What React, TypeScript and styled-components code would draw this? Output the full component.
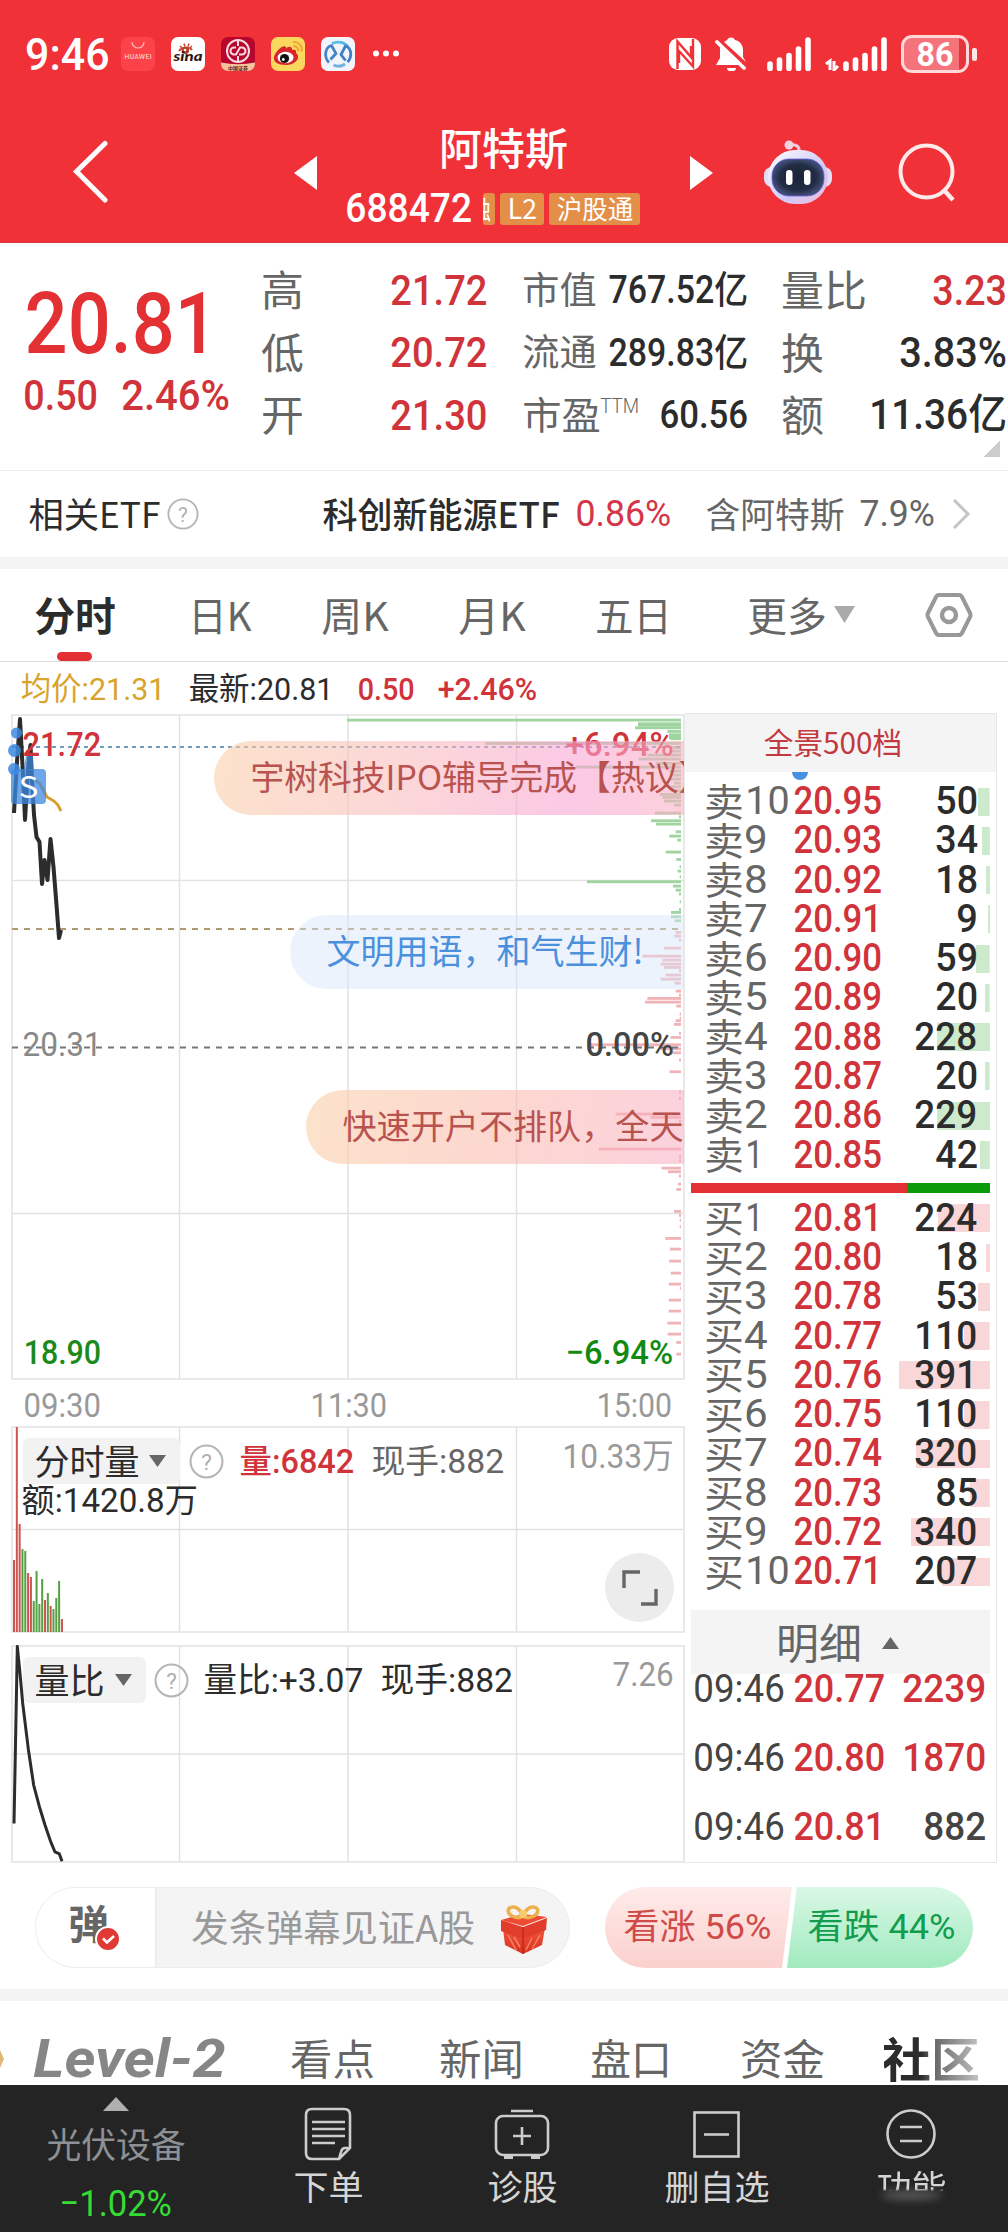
import React, { useLayoutEffect, useRef, useState } from "react";
import styled, { createGlobalStyle } from "styled-components";

const CJK = `"Noto Sans CJK SC", "Noto Sans", sans-serif`;
const NUM = `Roboto, "Noto Sans CJK SC", sans-serif`;
const RED = "#d0333a";
const INK = "#2c2c2c";
const GREY = "#666";
const FAINT = "#999";

const Global = createGlobalStyle`
  * { box-sizing: border-box; }
  body { margin: 0; background: #fff; font-family: ${CJK}; color: ${INK}; }
  #root { width: 1008px; }
  svg { display: block; flex: none; }
`;

/* ---------- text set to an exact measure ---------- */
const FitBox = styled.span<{ $w: number; $ml: number }>`
  display: block;
  flex: none;
  width: ${(p) => p.$w}px;
  margin-left: ${(p) => p.$ml}px;
  white-space: nowrap;
`;
const FitText = styled.span<{ $s: number; $wt: number; $c: string; $cjk: boolean }>`
  display: inline-block;
  vertical-align: top;
  line-height: ${(p) => p.$s}px;
  font-size: ${(p) => p.$s}px;
  font-weight: ${(p) => p.$wt};
  color: ${(p) => p.$c};
  font-family: ${(p) => (p.$cjk ? CJK : NUM)};
  transform-origin: 0 50%;
`;
type FitProps = { w: number; s: number; ml?: number; wt?: number; c?: string; cjk?: boolean; children: React.ReactNode };
function Fit({ w, s, ml = 0, wt = 500, c = INK, cjk = false, children }: FitProps) {
  const ref = useRef<HTMLSpanElement>(null);
  const [k, setK] = useState(1);
  useLayoutEffect(() => {
    if (ref.current) setK(w / (ref.current.offsetWidth - s * 0.09));
  }, [w, s, children]);
  const dy = cjk ? -0.056 * s : 0;
  return (
    <FitBox $w={w} $ml={ml}>
      <FitText ref={ref} $s={s} $wt={wt} $c={c} $cjk={cjk} style={{ transform: `translate(${-0.045 * s * k}px, ${dy}px) scaleX(${k})` }}>
        {children}
      </FitText>
    </FitBox>
  );
}

/* ---------- shared ---------- */
const Page = styled.div`
  width: 1008px;
  height: 2232px;
  overflow: hidden;
  background: #fff;
`;
const Row = styled.div<{ $h: number; $pl?: number; $pt?: number }>`
  display: flex;
  align-items: center;
  height: ${(p) => p.$h}px;
  padding-left: ${(p) => p.$pl ?? 0}px;
  padding-top: ${(p) => p.$pt ?? 0}px;
`;
const Band = styled.div`
  height: 12px;
  background: #f4f4f4;
`;
const Space = styled.span<{ $w: number }>`
  flex: none;
  width: ${(p) => p.$w}px;
`;

/* ---------- header ---------- */
const Header = styled.header`
  height: 243px;
  background: #f13138;
  border-bottom: 1px solid #d8393f;
`;
const StatusBar = styled.div`
  display: flex;
  align-items: center;
  height: 104px;
  padding: 4px 31px 0 27px;
`;
const AppIcons = styled.div`
  display: flex;
  gap: 16px;
  margin-left: 13px;
`;
const StatusRight = styled.div`
  display: flex;
  align-items: center;
  margin-left: auto;
`;
const NavBar = styled.div`
  display: flex;
  align-items: center;
  height: 138px;
`;
const TitleBlock = styled.div`
  flex: none;
  width: 303px;
  height: 138px;
  margin: 0 40px 0 30px;
  padding-top: 18px;
`;
const Tag = styled.span<{ $w: number; $ml: number; $clip?: boolean }>`
  display: flex;
  align-items: center;
  justify-content: center;
  flex: none;
  width: ${(p) => p.$w}px;
  height: 32px;
  margin-left: ${(p) => p.$ml}px;
  border-radius: 3px;
  overflow: ${(p) => (p.$clip ? "hidden" : "visible")};
  background: #e48f48;
`;

function StatusIcons() {
  return (
    <AppIcons>
      <svg width="34" height="34" viewBox="0 0 34 34">
        <rect width="34" height="34" rx="7" fill="#fb4349" />
        <path d="M11 5a6 6 0 0 0 12 0" fill="none" stroke="#ffb9b9" strokeWidth="1.2" />
        <text x="17" y="22" textAnchor="middle" fontFamily="Roboto" fontSize="6.6" textLength="27" fill="#ffe3e3">HUAWEI</text>
      </svg>
      <svg width="34" height="34" viewBox="0 0 34 34">
        <rect width="34" height="34" rx="7" fill="#fff" />
        <path d="M8 14c3-4 10-5 13-1" fill="none" stroke="#c94a33" strokeWidth="2" />
        <circle cx="14.500" cy="13.500" r="3.600" fill="#b33a25" />
        <circle cx="14" cy="13" r="1.300" fill="#fff" />
        <path d="M9 9 l2 2 M13 6.500 l1 3 M18 6.500 l-1 3 M21 9 l-2 2" stroke="#c94a33" strokeWidth="1.500" />
        <text x="17" y="23.500" textAnchor="middle" fontFamily="Lato, sans-serif" fontStyle="italic" fontWeight="900" fontSize="14" textLength="29" lengthAdjust="spacingAndGlyphs" fill="#35150f">sina</text>
      </svg>
      <svg width="34" height="34" viewBox="0 0 34 34">
        <rect width="34" height="34" rx="7" fill="#b8052e" />
        <path d="M0 25.500 Q17 29 34 25.500 V27 a7 7 0 0 1 -7 7 H7 a7 7 0 0 1 -7 -7z" fill="#f7c39c" />
        <g fill="none" stroke="#f6dce2" strokeWidth="2">
          <circle cx="17" cy="14" r="11" />
          <path d="M17 3v6M17 19v6M15 10.500h-2a3.500 3.500 0 0 0 0 7h2l4-7h2a3.500 3.500 0 0 1 0 7h-3" />
        </g>
        <text x="17" y="32.600" textAnchor="middle" fontFamily={CJK} fontWeight="700" fontSize="5" fill="#5c2617">中国证券</text>
      </svg>
      <svg width="34" height="34" viewBox="0 0 34 34">
        <rect width="34" height="34" rx="7" fill="#fbd75f" />
        <path d="M15 12c1-3 7-3 6 1 5-1 4 2 4 3 5 3 1 12-10 12C7 28 2 25 3 20c1-5 9-13 12-10z" fill="#d8252c" />
        <ellipse cx="14.500" cy="20.500" rx="8" ry="5.800" fill="#fff" />
        <circle cx="13.500" cy="21.500" r="4.600" fill="#111" />
        <circle cx="12.300" cy="22.500" r="1.400" fill="#fff" />
        <path d="M22 5c5-1 10 4 8.500 9.500M22.500 9c3 0 5 2 4.500 5" fill="none" stroke="#f0a030" strokeWidth="1.900" />
      </svg>
      <svg width="34" height="34" viewBox="0 0 34 34">
        <rect width="34" height="34" rx="7" fill="#f3f4fb" />
        <g fill="none" strokeWidth="2.800">
          <path d="M8 25.500C2.500 20 4 10 10.500 8.500L15 16.500L9.500 22.500" stroke="#4184c8" />
          <path d="M11 6.500c6-3 13-1 16 3.500" stroke="#56bde0" />
          <path d="M26.500 25C32 19.500 30 10.500 24.500 9L20 17.500L24.500 23.500" stroke="#3f7fc6" />
          <path d="M12.500 28c4 2 8 1.500 11.500-1" stroke="#6fb2e0" />
        </g>
      </svg>
      <svg width="40" height="34" viewBox="0 0 40 34">
        <g fill="#fff"><circle cx="5" cy="16.500" r="3" /><circle cx="15" cy="16.500" r="3" /><circle cx="25" cy="16.500" r="3" /></g>
      </svg>
    </AppIcons>
  );
}

function Bars() {
  return (
    <g stroke="#fff" strokeWidth="5.600" strokeLinecap="round">
      <path d="M3 27v4.500M12.500 23v8.500M22 18.500v13M31.500 12v19.500M41 3v28.500" />
    </g>
  );
}

const BatteryBox = styled.div`
  display: flex;
  align-items: center;
  justify-content: center;
  width: 68px;
  height: 38px;
  margin-left: 14px;
  border: 3px solid #ffd9da;
  border-radius: 11px;
  background: linear-gradient(90deg, #f5737a 0 88%, #e6343c 88%);
`;
const BatteryNub = styled.div`
  width: 5px;
  height: 13px;
  margin-left: 3px;
  border-radius: 2px;
  background: #ffe6e6;
`;

function Top() {
  return (
    <Header>
      <StatusBar>
        <Fit w={81} s={45} c="#fff">9:46</Fit>
        <StatusIcons />
        <StatusRight>
          <svg width="32" height="34" viewBox="0 0 32 34">
            <rect y="1" width="32" height="32" rx="9" fill="#fff" />
            <path d="M8.500 32V4.500L22 20V9" fill="none" stroke="#f13138" strokeWidth="2.400" />
            <path d="M24 2v27.500L10 14v12" fill="none" stroke="#f13138" strokeWidth="2.400" />
          </svg>
          <Space $w={14} />
          <svg width="32" height="34" viewBox="0 0 32 34">
            <path d="M12 3a4.500 4.500 0 0 1 8 0c5 1 8 5 8 10v7l3 5L9 5zM5 10l19 18H1l4-7z" fill="#fff" />
            <path d="M12 31h9a4.500 3.500 0 0 1-9 0z" fill="#fff" />
            <path d="M2 5l27 26" stroke="#fff" strokeWidth="3.800" strokeLinecap="round" />
          </svg>
          <Space $w={20} />
          <svg width="44" height="34" viewBox="0 0 44 34"><Bars /></svg>
          <Space $w={14} />
          <svg width="62" height="34" viewBox="0 0 62 34">
            <path d="M1 27l4-3v9M9 24v9l4-4" fill="none" stroke="#fff" strokeWidth="3" />
            <g transform="translate(18 0)"><Bars /></g>
          </svg>
          <BatteryBox><Fit w={34} s={34} wt={700} c="#fff">86</Fit></BatteryBox>
          <BatteryNub />
        </StatusRight>
      </StatusBar>
      <NavBar>
        <Space $w={72} />
        <svg width="38" height="66" viewBox="0 0 38 66"><path d="M33 3.500L4.500 31.500L33 60" fill="none" stroke="#fff" strokeWidth="5" strokeLinecap="round" /></svg>
        <Space $w={184} />
        <svg width="23" height="34" viewBox="0 0 23 34"><path d="M23 0v34L0 17z" fill="#fff" /></svg>
        <TitleBlock>
          <Row $h={52} $pl={94}><Fit w={125} s={43} cjk c="#fff">阿特斯</Fit></Row>
          <Row $h={70}>
            <Fit w={123} s={40} c="#fff">688472</Fit>
            <Tag $w={12} $ml={13} $clip><Fit w={24} s={25} cjk wt={400} c="#fff" ml={-22}>融</Fit></Tag>
            <Tag $w={44} $ml={5}><Fit w={27} s={28} cjk wt={400} c="#fff">L2</Fit></Tag>
            <Tag $w={91} $ml={5}><Fit w={74} s={26} cjk wt={400} c="#fff">沪股通</Fit></Tag>
          </Row>
        </TitleBlock>
        <svg width="23" height="34" viewBox="0 0 23 34"><path d="M0 0v34L23 17z" fill="#fff" /></svg>
        <Space $w={50} />
        <svg width="70" height="68" viewBox="0 0 70 68">
          <defs>
            <linearGradient id="shell" x1="0" y1="0" x2="1" y2="1"><stop offset="0" stopColor="#fff" /><stop offset="0.600" stopColor="#cfcaf7" /><stop offset="1" stopColor="#f3bcd9" /></linearGradient>
            <radialGradient id="face"><stop offset="0" stopColor="#1a2338" /><stop offset="0.700" stopColor="#222c44" /><stop offset="1" stopColor="#3f4c75" /></radialGradient>
          </defs>
          <path d="M36 14c1-7-3-9-9-8" fill="none" stroke="#f3cfe0" strokeWidth="3" />
          <circle cx="26" cy="6" r="4.500" fill="#f7d3df" />
          <rect x="1" y="28" width="68" height="20" rx="8" fill="#e4ddf8" />
          <rect x="5" y="11" width="60" height="54" rx="27" fill="url(#shell)" />
          <rect x="9" y="20" width="52" height="37" rx="17" fill="url(#face)" stroke="#6a5edb" strokeWidth="0.800" />
          <rect x="23" y="31" width="6.500" height="15" rx="3.200" fill="#fff" />
          <rect x="41" y="31" width="6.500" height="15" rx="3.200" fill="#fff" />
        </svg>
        <Space $w={64} />
        <svg width="62" height="62" viewBox="0 0 62 62"><circle cx="29.500" cy="29.500" r="26" fill="none" stroke="#ffe9e9" strokeWidth="4" /><path d="M46 47l10 11" stroke="#ffe9e9" strokeWidth="4.500" /></svg>
      </NavBar>
    </Header>
  );
}

/* ---------- quote summary ---------- */
const Quote = styled.section`
  display: grid;
  grid-template-columns: 263px 261px 259px 225px;
  height: 228px;
  padding-top: 16px;
  border-bottom: 1px solid #ececec;
`;
const Stack = styled.div`
  display: flex;
  flex-direction: column;
`;
const StatRow = styled.div<{ $right: number }>`
  display: flex;
  align-items: center;
  justify-content: space-between;
  height: 62.500px;
  padding-right: ${(p) => p.$right}px;
`;
const PE = styled.div`
  display: flex;
`;
const Corner = styled.div`
  align-self: flex-end;
  width: 17px;
  height: 17px;
  margin: -7px 8px 0 0;
  background: linear-gradient(135deg, transparent 50%, #ccc 50%);
`;

function Summary() {
  return (
    <Quote>
      <Stack>
        <Row $h={130} $pl={28}><Fit w={186} s={86} c="#e23033">20.81</Fit></Row>
        <Row $h={13} $pl={25}><Fit w={71} s={42} c={RED}>0.50</Fit><Fit w={105} s={42} ml={27} c={RED}>2.46%</Fit></Row>
      </Stack>
      <Stack>
        {[["高", "21.72"], ["低", "20.72"], ["开", "21.30"]].map(([l, v]) => (
          <StatRow $right={38} key={l}><Fit w={39} s={42} cjk wt={400} c={GREY}>{l}</Fit><Fit w={94} s={43} c={RED}>{v}</Fit></StatRow>
        ))}
      </Stack>
      <Stack>
        <StatRow $right={36}><Fit w={71} s={37} cjk wt={400} c={GREY}>市值</Fit><Fit w={137} s={38}>767.52亿</Fit></StatRow>
        <StatRow $right={36}><Fit w={71} s={37} cjk wt={400} c={GREY}>流通</Fit><Fit w={137} s={38}>289.83亿</Fit></StatRow>
        <StatRow $right={36}>
          <PE><Fit w={75} s={38} cjk wt={400} c={GREY}>市盈</Fit><Fit w={37} s={20} ml={2} wt={300} c={GREY}>TTM</Fit></PE>
          <Fit w={86} s={39}>60.56</Fit>
        </StatRow>
      </Stack>
      <Stack>
        <StatRow $right={3}><Fit w={82} s={42} cjk wt={400} c={GREY}>量比</Fit><Fit w={71} s={43} c={RED}>3.23</Fit></StatRow>
        <StatRow $right={3}><Fit w={39} s={42} cjk wt={400} c={GREY}>换</Fit><Fit w={104} s={42}>3.83%</Fit></StatRow>
        <StatRow $right={3}><Fit w={39} s={42} cjk wt={400} c={GREY}>额</Fit><Fit w={134} s={42}>11.36亿</Fit></StatRow>
        <Corner />
      </Stack>
    </Quote>
  );
}

const HelpBox = styled.span<{ $ml: number }>`
  margin-left: ${(p) => p.$ml}px;
`;
const Help = ({ d, ml }: { d: number; ml: number }) => (
  <HelpBox $ml={ml}>
    <svg width={d} height={d} viewBox="0 0 34 34">
      <circle cx="17" cy="17" r="15.500" fill="none" stroke="#b5b5b5" strokeWidth="2" />
      <text x="17" y="25" textAnchor="middle" fontFamily="Roboto" fontSize="22" fill="#b0b0b0">?</text>
    </svg>
  </HelpBox>
);

/* ---------- chart period tabs ---------- */
const Tabs = styled.nav`
  display: flex;
  align-items: stretch;
  height: 93px;
  padding-left: 36px;
  border-bottom: 1px solid #dedede;
`;
const TabItem = styled.div<{ $ml?: number }>`
  display: flex;
  flex-direction: column;
  align-items: center;
  padding-top: 27px;
  margin-left: ${(p) => p.$ml ?? 0}px;
`;
const Underline = styled.div`
  width: 35px;
  height: 9px;
  margin-top: 16px;
  margin-right: 2px;
  border-radius: 5px;
  background: #e23033;
`;
const TabIcon = styled.div<{ $ml: number; $pt: number }>`
  margin-left: ${(p) => p.$ml}px;
  padding-top: ${(p) => p.$pt}px;
`;

function PeriodTabs() {
  return (
    <Tabs>
      <TabItem><Fit w={78} s={40} cjk wt={700}>分时</Fit><Underline /></TabItem>
      <TabItem $ml={76}><Fit w={60} s={40} cjk wt={400} c={GREY}>日K</Fit></TabItem>
      <TabItem $ml={73}><Fit w={64} s={40} cjk wt={400} c={GREY}>周K</Fit></TabItem>
      <TabItem $ml={73}><Fit w={64} s={40} cjk wt={400} c={GREY}>月K</Fit></TabItem>
      <TabItem $ml={73}><Fit w={73} s={40} cjk wt={400} c={GREY}>五日</Fit></TabItem>
      <TabItem $ml={79}><Fit w={76} s={40} cjk wt={400} c={GREY}>更多</Fit></TabItem>
      <TabIcon $ml={9} $pt={37}><svg width="21" height="17" viewBox="0 0 21 17"><path d="M0 0h21L10.500 17z" fill="#aaa" /></svg></TabIcon>
      <TabIcon $ml={70} $pt={23}>
        <svg width="48" height="46" viewBox="0 0 48 46"><path d="M14 3h20q2 0 3 2l8 16q1 2 0 4l-8 16q-1 2-3 2H14q-2 0-3-2L3 25q-1-2 0-4L11 5q1-2 3-2z" fill="none" stroke="#999" strokeWidth="4" /><circle cx="24" cy="23" r="7" fill="none" stroke="#999" strokeWidth="4.400" /></svg>
      </TabIcon>
    </Tabs>
  );
}

/* ---------- charts ---------- */
const Market = styled.section`
  display: grid;
  grid-template-columns: 685px 312px;
  height: 1150px;
`;
const Panel = styled.div<{ $h: number; $mt?: number }>`
  position: relative;
  height: ${(p) => p.$h}px;
  margin-top: ${(p) => p.$mt ?? 0}px;
  overflow: hidden;
`;
const Backdrop = styled.div`
  position: absolute;
  inset: 0;
`;
const Over = styled.div<{ $x: number; $y: number }>`
  position: absolute;
  left: ${(p) => p.$x}px;
  top: ${(p) => p.$y}px;
  display: flex;
  align-items: center;
  height: 0;
`;
const Danmaku = styled.div<{ $x: number; $y: number; $tone: "warm" | "blue" | "coral" }>`
  position: absolute;
  left: ${(p) => p.$x}px;
  right: 1px;
  top: ${(p) => p.$y}px;
  display: flex;
  align-items: center;
  height: 74px;
  padding-left: 38px;
  border-radius: 37px 0 0 37px;
  overflow: hidden;
  background: ${(p) =>
    p.$tone === "blue"
      ? "rgba(214, 228, 249, 0.45)"
      : p.$tone === "warm"
      ? "linear-gradient(100deg, rgba(250,205,165,.58), rgba(249,180,190,.56) 48%, rgba(250,165,212,.6) 75%, rgba(250,178,195,.6))"
      : "linear-gradient(100deg, rgba(250,205,165,.58), rgba(250,184,170,.56) 50%, rgba(249,175,195,.56))"};
`;
const Marker = styled.div`
  position: absolute;
  left: 11px;
  top: 56px;
  display: flex;
  align-items: center;
  justify-content: center;
  width: 35px;
  height: 35px;
  border-radius: 4px;
  background: rgba(61, 138, 226, 0.75);
`;

const asks: [number, number][] = [
  [60, -471], [71, 402], [75, 402], [83, 393], [94, 490], [104, 495], [112, 495], [116, 500], [130, -57], [142, 500], [153, 495], [165, 430], [177, 404], [190, 455], [201, 217], [213, 495],
  [225, 498], [237, 500], [249, 510], [260, 500], [272, 505], [283, 467], [292, 475], [303, 480], [315, 510], [339, 453], [350, 525], [362, 441],
  [372, 456], [395, 515], [408, 496], [420, 520], [456, 485], [478, 517], [500, 527], [513, 521], [530, 527], [545, 249], [558, 507], [570, 515],
  [582, 525], [605, 527], [628, 525], [637, 501], [650, 501], [662, 512],
];
const bids: [number, number][] = [
  [697, 515], [708, 511], [720, 525], [744, 480], [768, 415], [780, 475], [792, 470], [802, 480], [812, 525], [825, 485], [837, 470], [849, 512],
  [873, 515], [885, 525], [895, 430], [906, 423], [918, 517], [942, 527], [954, 527], [962, 515], [973, 510], [1000, 525], [1012, 500], [1034, 260],
  [1046, 470], [1058, 505], [1080, 525], [1115, 497], [1175, 525], [1195, 525], [1242, 335], [1252, 440], [1264, 525], [1347, 285], [1370, 525],
  [1382, 525], [1404, 473], [1415, 492], [1428, 525], [1452, 522], [1468, 517], [1534, 510], [1546, 525], [1560, 527], [1580, 527], [1615, 484],
  [1647, 498], [1683, 495], [1719, 500], [1752, 494], [1765, 528], [1800, 494], [1833, 494], [1869, 490], [1902, 491], [1927, 517], [1962, 517],
];
const depth = (list: [number, number][], fill: string) =>
  list.map(([y, x]) => <rect key={y} x={504 + x / 3} y={698.7 + y / 3} width={177 - x / 3} height="2.800" fill={fill} />);

function PriceChart() {
  return (
    <Panel $h={667}>
      <Backdrop>
        <svg width="685" height="667" viewBox="0 713 685 667">
          <g stroke="#e2e2e2" strokeWidth="1.500" fill="none">
            <path d="M12 715H684V1379H12zM12 880.500H684M12 1213.500H684M179.500 715V1379M348 715V1379M516.500 715V1379" />
          </g>
          {depth(asks, "#9fd3a0")}
          {depth(bids, "#f0b3b8")}
          <path d="M12 747H684" stroke="#6f9fc0" strokeWidth="1.800" strokeDasharray="4 4" />
          <path d="M12 929H684" stroke="#b09a72" strokeWidth="1.800" strokeDasharray="6 6" />
          <path d="M12 1047.500H684" stroke="#777" strokeWidth="1.800" strokeDasharray="6 6" />
          <polyline points="14,813 17,762 20,719 23,775 25,820 28,770 30.500,745 32,780 34,815 36.500,837 39.500,842 42,884 44.500,860 47.500,880 50.500,839 53.500,867 56.500,905 59,938 61,930" fill="none" stroke="#2c2c2c" strokeWidth="4" strokeLinejoin="round" />
          <polyline points="33,778 40,784 47,797 54,801 58,805 61,811" fill="none" stroke="#d99b2b" strokeWidth="2.800" />
          <g fill="#3d8ae2" fillOpacity="0.850"><circle cx="16.500" cy="733" r="5.500" /><circle cx="14.500" cy="750.500" r="6.500" /><circle cx="14" cy="769" r="6" /><path d="M24 770l2-16h7v16z" fillOpacity="0.700" /></g>
        </svg>
      </Backdrop>
      <Marker><Fit w={17} s={30} cjk wt={400} c="#fff">S</Fit></Marker>
      <Over $x={24} $y={31}><Fit w={76} s={34} c={RED}>21.72</Fit></Over>
      <Over $x={567} $y={31}><Fit w={105} s={34} c={RED}>+6.94%</Fit></Over>
      <Over $x={24} $y={331}><Fit w={76} s={34} wt={400} c="#888">20.31</Fit></Over>
      <Over $x={587} $y={331}><Fit w={85} s={34} c="#444">0.00%</Fit></Over>
      <Over $x={25} $y={639}><Fit w={75} s={34} c="#1b8a1b">18.90</Fit></Over>
      <Over $x={567} $y={639}><Fit w={105} s={34} c="#128a12">−6.94%</Fit></Over>
      <Danmaku $x={214} $y={28} $tone="warm"><Fit w={459} s={34} cjk wt={400} c="#b9534f">宇树科技IPO辅导完成【热议】</Fit></Danmaku>
      <Danmaku $x={290} $y={202} $tone="blue"><Fit w={314} s={34} cjk wt={400} c="#4a90dc">文明用语，和气生财!</Fit></Danmaku>
      <Danmaku $x={306} $y={377} $tone="coral"><Fit w={338} s={34} cjk wt={400} c="#b9534f">快速开户不排队，全天</Fit></Danmaku>
    </Panel>
  );
}

const volume: [number, 0 | 1][] = [
  [1560, 1], [1427, 1], [1524, 1], [1549, 0], [1551, 0], [1573, 1], [1577, 1], [1601, 0], [1571, 0], [1604, 0], [1579, 0], [1600, 1], [1593, 0],
  [1606, 1], [1609, 0], [1598, 0], [1581, 0], [1619, 1],
];
const Picker = styled.div<{ $w: number }>`
  display: flex;
  align-items: center;
  justify-content: space-between;
  flex: none;
  width: ${(p) => p.$w}px;
  height: 46px;
  padding: 0 14px 0 13px;
  border-radius: 6px;
  background: #f2f2f2;
`;
const Legend = styled.div`
  position: relative;
  display: flex;
  align-items: center;
  height: 46px;
  margin: 12px 0 0 23px;
`;
const SecondLine = styled.div`
  position: relative;
  display: flex;
  align-items: center;
  height: 32px;
  padding-left: 23px;
`;
const Expand = styled.div`
  position: absolute;
  left: 605px;
  top: 127px;
  display: flex;
  align-items: center;
  justify-content: center;
  width: 69px;
  height: 69px;
  border-radius: 50%;
  background: #ececec;
`;
const Caret = () => <svg width="17" height="12" viewBox="0 0 17 12"><path d="M0 0h17L8.500 12z" fill={GREY} /></svg>;

function VolumeChart() {
  return (
    <Panel $h={207}>
      <Backdrop>
        <svg width="685" height="207" viewBox="0 1426 685 207">
          <path d="M12 1427H684V1632H12zM12 1529.500H684M179.500 1427V1632M348 1427V1632M516.500 1427V1632" stroke="#e2e2e2" strokeWidth="1.500" fill="none" />
          {volume.map(([y, up], i) => <rect key={i} x={13 + i * 2.82} y={y} width="2" height={1632 - y} fill={up ? "#cf5450" : "#55a043"} />)}
        </svg>
      </Backdrop>
      <Legend>
        <Picker $w={157}><Fit w={102} s={35} cjk wt={400}>分时量</Fit><Caret /></Picker>
        <Help d={35} ml={9} />
        <Fit w={112} s={33} ml={17} c={RED}>量:6842</Fit>
        <Fit w={130} s={33} ml={20} wt={400} c={GREY}>现手:882</Fit>
      </Legend>
      <SecondLine><Fit w={173} s={33} wt={400}>额:1420.8万</Fit></SecondLine>
      <Over $x={564} $y={30}><Fit w={108} s={34} wt={400} c={FAINT}>10.33万</Fit></Over>
      <Expand>
        <svg width="36" height="36" viewBox="0 0 36 36"><path d="M2 18V2h16M34 19v15H19" fill="none" stroke="#666" strokeWidth="3.400" /></svg>
      </Expand>
    </Panel>
  );
}

const ratio: [number, number][] = [[42, 1416], [52, 937], [60, 1010], [68, 1090], [85, 1215], [101, 1312], [118, 1370], [135, 1420], [152, 1465], [165, 1493], [178, 1498], [186, 1518]];
function RatioChart() {
  return (
    <Panel $h={218} $mt={12}>
      <Backdrop>
        <svg width="685" height="218" viewBox="0 1645 685 218">
          <path d="M12 1646H684V1862H12zM12 1754H684M179.500 1646V1862M348 1646V1862M516.500 1646V1862" stroke="#e2e2e2" strokeWidth="1.500" fill="none" />
        </svg>
      </Backdrop>
      <Legend>
        <Picker $w={123}><Fit w={67} s={35} cjk wt={400}>量比</Fit><Caret /></Picker>
        <Help d={35} ml={8} />
        <Fit w={157} s={34} ml={16} wt={400}>量比:+3.07</Fit>
        <Fit w={130} s={34} ml={20} wt={400}>现手:882</Fit>
      </Legend>
      <Over $x={614} $y={29}><Fit w={58} s={34} wt={400} c={FAINT}>7.26</Fit></Over>
      <Backdrop>
        <svg width="685" height="218" viewBox="0 1645 685 218">
          <polyline points={ratio.map(([x, y]) => `${x / 3},${1300 + y * 0.3697}`).join(" ")} fill="none" stroke="#2c2c2c" strokeWidth="3" strokeLinejoin="round" />
        </svg>
      </Backdrop>
    </Panel>
  );
}

/* ---------- order book ---------- */
const Book = styled.aside`
  border: 1px solid #e6e6e6;
  border-width: 1px 1px 1px 0;
  padding-left: 6px;
`;
const BookHead = styled.div`
  display: flex;
  align-items: center;
  height: 58px;
  margin-left: -6px;
  padding-left: 80px;
  background: #f4f4f4;
`;
const Dot = styled.div`
  width: 16px;
  height: 8px;
  margin: 0 0 2px 101px;
  border-radius: 0 0 8px 8px;
  background: #4a90e2;
`;
const Level = styled.div`
  display: flex;
  align-items: center;
  height: 39.280px;
  padding-left: 15px;
`;
const LabelCell = styled.div`
  display: flex;
  align-items: center;
  width: 89px;
`;
const QtyCell = styled.div<{ $buy: boolean; $bar: number }>`
  display: flex;
  align-items: center;
  justify-content: flex-end;
  width: 109px;
  height: 28px;
  padding-right: 14.5px;
  background: linear-gradient(${(p) => (p.$buy ? "#f9d6d8, #f9d6d8" : "#cdeacd, #cdeacd")}) right / ${(p) => p.$bar}px 28px no-repeat;
`;
const Balance = styled.div`
  width: 299px;
  height: 10px;
  margin: 8px 0 6px;
  background: linear-gradient(90deg, #e23033 216px, #0a9a0a 216px);
`;
const DetailHead = styled.div`
  display: flex;
  align-items: center;
  width: 299px;
  height: 64px;
  margin: 19px 0 -19px;
  padding: 2px 0 0 87px;
  background: #f4f4f4;
`;
const Trade = styled.div`
  display: flex;
  align-items: center;
  height: 69px;
  padding-left: 4px;
`;
const TradeQty = styled.div`
  display: flex;
  justify-content: flex-end;
  width: 101px;
`;

const sells: [number, string, number][] = [[10, "20.95", 50], [9, "20.93", 34], [8, "20.92", 18], [7, "20.91", 9], [6, "20.90", 59], [5, "20.89", 20], [4, "20.88", 228], [3, "20.87", 20], [2, "20.86", 229], [1, "20.85", 42]];
const buys: [number, string, number][] = [[1, "20.81", 224], [2, "20.80", 18], [3, "20.78", 53], [4, "20.77", 110], [5, "20.76", 391], [6, "20.75", 110], [7, "20.74", 320], [8, "20.73", 85], [9, "20.72", 340], [10, "20.71", 207]];

function BookLevel({ side, n, price, qty }: { side: string; n: number; price: string; qty: number }) {
  return (
    <Level>
      <LabelCell>
        <Fit w={36} s={38} cjk wt={400} c={GREY}>{side}</Fit>
        <Fit w={n === 10 ? 41 : n === 1 ? 15 : 20} s={39} ml={n % 9 === 1 ? 5 : 4} wt={400} c={GREY}>{n}</Fit>
      </LabelCell>
      <Fit w={86} s={39} c={RED}>{price}</Fit>
      <QtyCell $buy={side === "买"} $bar={Math.max(1.5, qty * 0.2325)}>
        <Fit w={String(qty).length * 21 - 3} s={39}>{qty}</Fit>
      </QtyCell>
    </Level>
  );
}

function OrderBook() {
  return (
    <Book>
      <BookHead><Fit w={136} s={30} cjk wt={400} c="#c23a3f">全景500档</Fit></BookHead>
      <Dot />
      {sells.map(([n, p, q]) => <BookLevel key={n} side="卖" n={n} price={p} qty={q} />)}
      <Balance />
      {buys.map(([n, p, q]) => <BookLevel key={n} side="买" n={n} price={p} qty={q} />)}
      <DetailHead>
        <Fit w={82} s={42} cjk wt={400} c={GREY}>明细</Fit>
        <Space $w={22} />
        <svg width="17" height="12" viewBox="0 0 17 12"><path d="M0 12h17L8.500 0z" fill={GREY} /></svg>
      </DetailHead>
      {[["20.77", "2239", RED], ["20.80", "1870", RED], ["20.81", "882", "#444"]].map(([p, q, c]) => (
        <Trade key={p}>
          <Fit w={88} s={39} wt={400} c="#444">09:46</Fit>
          <Fit w={89} s={39} ml={12} c={RED}>{p}</Fit>
          <TradeQty><Fit w={q === "882" ? 60 : 81} s={39} c={c}>{q}</Fit></TradeQty>
        </Trade>
      ))}
    </Book>
  );
}

/* ---------- comment bar and vote ---------- */
const CommentRow = styled.section`
  display: flex;
  height: 126px;
  padding: 24px 0 0 35px;
`;
const Comment = styled.div`
  display: flex;
  width: 535px;
  height: 81px;
  border: 1px solid #ececec;
  border-radius: 41px;
  overflow: hidden;
  background: #f4f4f4;
`;
const Toggle = styled.div`
  position: relative;
  width: 121px;
  padding: 16px 0 0 34px;
  border-right: 2px solid #ececec;
  background: #fff;
`;
const Check = styled.div`
  position: absolute;
  left: 59px;
  top: 38px;
`;
const Placeholder = styled.div`
  display: flex;
  align-items: center;
  padding: 2px 0 0 36px;
  gap: 26px;
`;
const Vote = styled.div`
  display: flex;
  width: 368px;
  height: 81px;
  margin-left: 35px;
  border-radius: 41px;
  overflow: hidden;
`;
const Side = styled.div<{ $up?: boolean }>`
  display: flex;
  align-items: center;
  width: ${(p) => (p.$up ? 187 : 186)}px;
  margin-left: ${(p) => (p.$up ? 0 : -5)}px;
  padding-left: ${(p) => (p.$up ? 20 : 22)}px;
  clip-path: ${(p) => (p.$up ? "polygon(0 0, 100% 0, 177px 100%, 0 100%)" : "polygon(10px 0, 100% 0, 100% 100%, 0 100%)")};
  background: ${(p) => (p.$up ? "linear-gradient(#feebe9, #fbd0cd)" : "linear-gradient(#d9f8e6, #a1eabf)")};
`;

function Interaction() {
  return (
    <CommentRow>
      <Comment>
        <Toggle>
          <Fit w={37} s={40} cjk wt={700} c={GREY}>弹</Fit>
          <Check><svg width="26" height="26" viewBox="0 0 26 26"><circle cx="13" cy="13" r="12" fill="#e03a35" stroke="#fff" strokeWidth="2" /><path d="M8 12.500l4 4L19 10" fill="none" stroke="#fff" strokeWidth="2.600" /></svg></Check>
        </Toggle>
        <Placeholder>
          <Fit w={281} s={37} cjk wt={400} c={FAINT}>发条弹幕见证A股</Fit>
          <svg width="48" height="52" viewBox="0 0 48 52">
            <defs><linearGradient id="box" x1="0" y1="0" x2="0" y2="1"><stop offset="0" stopColor="#f0563f" /><stop offset="1" stopColor="#d93020" /></linearGradient></defs>
            <path d="M3 26l20 7v18L5 42zM23 33l22-8-3 17-19 9z" fill="url(#box)" />
            <path d="M1 17l22-6 24 3-24 9z" fill="#ee4a35" />
            <path d="M1 17l22 7 24-9-1 12-23 9-22-8z" fill="#e23d2a" />
            <path d="M23 24v27" stroke="#b5261a" strokeWidth="1.200" />
            <path d="M8 32l8 15M14 34l6 10M40 32l-8 14M32 35l-6 12" stroke="#f9845f" strokeWidth="1.500" />
            <path d="M23 13C17-3 1 6 12 13c4 2 8 2 11 0 6-16 22-7 11 0-4 2-8 2-11 0z" fill="none" stroke="#eeb04a" strokeWidth="3.600" />
            <circle cx="23" cy="11" r="4" fill="#f6cc6e" />
          </svg>
        </Placeholder>
      </Comment>
      <Vote>
        <Side $up><Fit w={145} s={35} wt={400} c="#cf4a49">看涨 56%</Fit></Side>
        <Side><Fit w={145} s={35} wt={400} c="#119c4e">看跌 44%</Fit></Side>
      </Vote>
    </CommentRow>
  );
}

/* ---------- section tabs ---------- */
const Sections = styled.nav`
  display: flex;
  align-items: center;
  height: 84px;
  padding-top: 32px;
`;
const LevelTwo = styled.div`
  font-style: italic;
`;
const Faded = styled.div`
  margin-left: 61px;
  mask-image: linear-gradient(90deg, #000 40%, rgba(0, 0, 0, 0.75) 50%, rgba(0, 0, 0, 0.3));
`;

function SectionTabs() {
  return (
    <Sections>
      <svg width="36" height="20" viewBox="0 0 36 20"><path d="M-6 10L0 1l4 9-4 9z" fill="#e0b878" /></svg>
      <LevelTwo><Fit w={187} s={53} wt={700} c="#868686">Level-2</Fit></LevelTwo>
      <Fit w={81} s={42} ml={69} cjk wt={400} c={GREY}>看点</Fit>
      <Fit w={81} s={42} ml={68} cjk wt={400} c={GREY}>新闻</Fit>
      <Fit w={78} s={42} ml={70} cjk wt={400} c={GREY}>盘口</Fit>
      <Fit w={81} s={42} ml={72} cjk wt={400} c={GREY}>资金</Fit>
      <Faded><Fit w={94} s={47} cjk wt={700}>社区</Fit></Faded>
    </Sections>
  );
}

/* ---------- bottom bar ---------- */
const Bottom = styled.footer`
  display: grid;
  grid-template-columns: 231px repeat(4, 194.300px);
  height: 147px;
  background: #242424;
`;
const Sector = styled.div`
  display: flex;
  flex-direction: column;
  align-items: center;
  padding-top: 12px;
`;
const Action = styled.div`
  display: flex;
  flex-direction: column;
  align-items: center;
  padding-top: 20px;
`;
const Glyph = styled.div`
  display: flex;
  align-items: center;
  justify-content: center;
  height: 58px;
  margin-bottom: 8px;
`;
const Gap = styled.div<{ $h: number }>`
  height: ${(p) => p.$h}px;
`;
const Smudged = styled.div`
  position: relative;
  mask-image: linear-gradient(#000 52%, rgba(0, 0, 0, 0) 60%);
`;
const Smear = styled.div`
  width: 60px;
  height: 10px;
  margin-top: -15px;
  border-radius: 50%;
  background: rgba(190, 190, 190, 0.35);
  filter: blur(4px);
`;
const stroke = { fill: "none", stroke: "#ccc", strokeWidth: 2.6 };

function BottomBar() {
  return (
    <Bottom>
      <Sector>
        <svg width="26" height="14" viewBox="0 0 26 14"><path d="M0 14h26L13 0z" fill="#b0b0b0" /></svg>
        <Gap $h={16} />
        <Fit w={136} s={35} cjk wt={400} c="#8d9195">光伏设备</Fit>
        <Gap $h={23} />
        <Fit w={109} s={37} wt={400} c="#35dc35">−1.02%</Fit>
      </Sector>
      <Action>
        <Glyph><svg width="48" height="54" viewBox="0 0 48 54"><path d="M8 2h32q6 0 6 6v33L35 52H8q-6 0-6-6V8q0-6 6-6zM46 41h-5q-3 0-4 4l-2 7" {...stroke} /><path d="M8 15h33M8 22h33M8 29h33M8 36h23" {...stroke} /></svg></Glyph>
        <Fit w={67} s={34} cjk wt={400} c="#d5d5d5">下单</Fit>
      </Action>
      <Action>
        <Glyph><svg width="56" height="52" viewBox="0 0 56 52"><rect x="2" y="8" width="52" height="39" rx="7" {...stroke} /><path d="M17 3h22M28 19v18M19 28h18" {...stroke} /><path d="M10 49h9M37 49h9" stroke="#ccc" strokeWidth="4" /></svg></Glyph>
        <Fit w={67} s={34} cjk wt={400} c="#d5d5d5">诊股</Fit>
      </Action>
      <Action>
        <Glyph><svg width="47" height="47" viewBox="0 0 47 47"><rect x="1.500" y="1.500" width="44" height="44" {...stroke} /><path d="M11 23.500h25" {...stroke} /></svg></Glyph>
        <Fit w={102} s={34} cjk wt={400} c="#d5d5d5">删自选</Fit>
      </Action>
      <Action>
        <Glyph><svg width="50" height="50" viewBox="0 0 50 50"><circle cx="25" cy="25" r="23.500" {...stroke} /><path d="M14 18h22M14 32h22" {...stroke} /></svg></Glyph>
        <Smudged><Fit w={67} s={34} cjk wt={400} c="#d5d5d5">功能</Fit></Smudged>
        <Smear />
      </Action>
    </Bottom>
  );
}

export default function App() {
  return (
    <Page>
      <Global />
      <Top />
      <Summary />
      <Row $h={86} $pl={30}>
        <Fit w={129} s={35} cjk wt={400}>相关ETF</Fit>
        <Help d={32} ml={8} />
        <Fit w={234} s={35} ml={125} cjk wt={500}>科创新能源ETF</Fit>
        <Fit w={93} s={36} ml={19} wt={400} c="#d43548">0.86%</Fit>
        <Fit w={136} s={35} ml={37} cjk wt={400} c={GREY}>含阿特斯</Fit>
        <Fit w={72} s={36} ml={18} wt={400} c={GREY}>7.9%</Fit>
        <Space $w={19} />
        <svg width="19" height="32" viewBox="0 0 19 32"><path d="M2 2l14 14L2 30" fill="none" stroke="#c4c4c4" strokeWidth="3" /></svg>
      </Row>
      <Band />
      <PeriodTabs />
      <Row $h={51} $pl={22} $pt={3}>
        <Fit w={142} s={32} wt={400} c="#d8a42c">均价:21.31</Fit>
        <Fit w={142} s={32} ml={26} wt={400}>最新:20.81</Fit>
        <Fit w={54} s={32} ml={27} c={RED}>0.50</Fit>
        <Fit w={97} s={32} ml={26} c={RED}>+2.46%</Fit>
      </Row>
      <Market>
        <div>
          <PriceChart />
          <Row $h={46} $pl={25} $pt={3}>
            <Fit w={75} s={34} wt={400} c={FAINT}>09:30</Fit>
            <Fit w={74} s={34} ml={212} wt={400} c={FAINT}>11:30</Fit>
            <Fit w={73} s={34} ml={212} wt={400} c={FAINT}>15:00</Fit>
          </Row>
          <VolumeChart />
          <RatioChart />
        </div>
        <OrderBook />
      </Market>
      <Interaction />
      <Band />
      <SectionTabs />
      <BottomBar />
    </Page>
  );
}
